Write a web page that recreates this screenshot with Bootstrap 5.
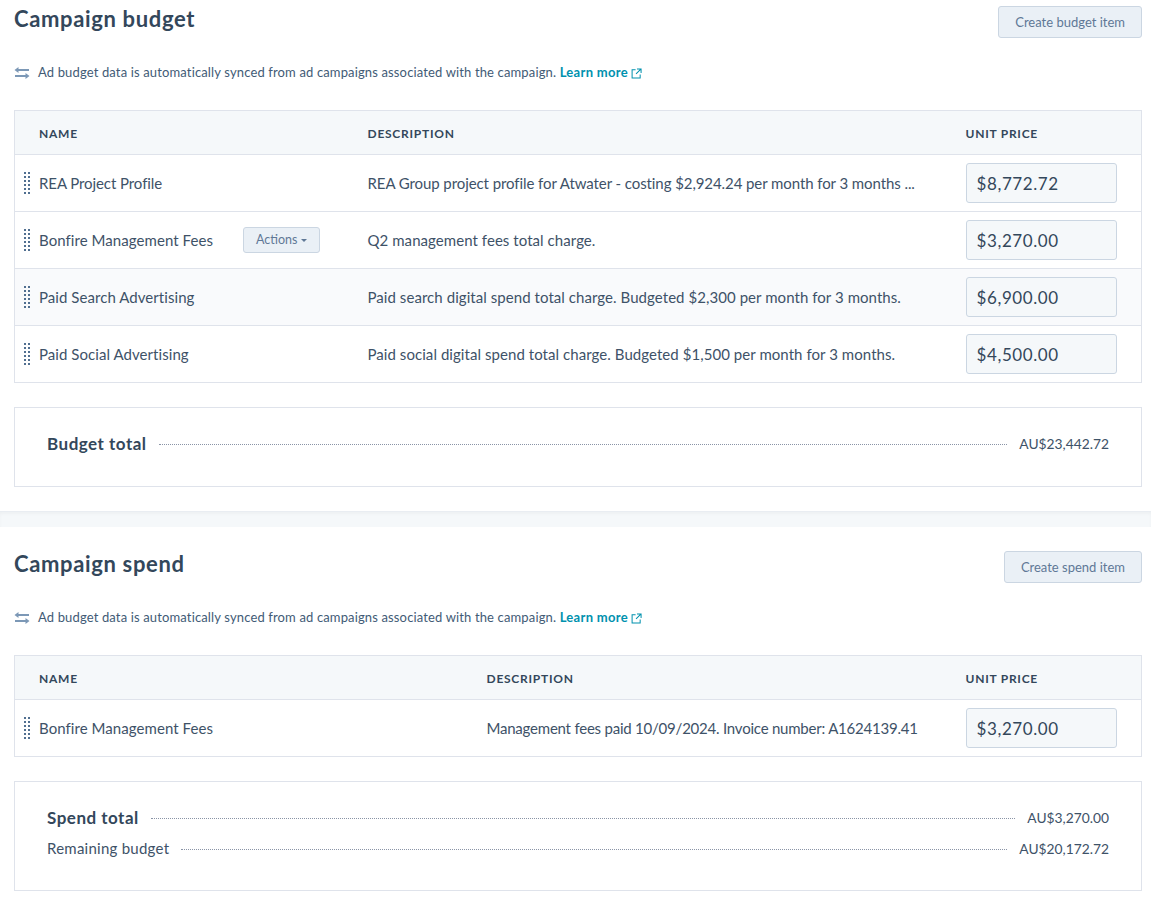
<!DOCTYPE html>
<html lang="en">
<head>
    <meta charset="UTF-8">
    <title>Campaign budget</title>
    <link rel="stylesheet" href="https://cdn.jsdelivr.net/npm/bootstrap@5.3.0/dist/css/bootstrap.min.css">
    <style>
        html, body { margin: 0; background: #fff; }
        body {
            font-family: "Lato", "Liberation Sans", sans-serif;
            color: #33475b;
            font-size: 15px;
            height: 899px;
            overflow: hidden;
        }
        .budget-section { padding: 0 9px 0 14px; }
        .budget-section.next-section { padding-top: 18px; }
        .budget-head { height: 38px; }
        .budget-title { font-size: 22px; font-weight: 700; margin: 0; color: #33475b; line-height: 38px; letter-spacing: .65px; }
        .soft-btn {
            background: #eaf0f6; border: 1px solid #cbd6e2; border-radius: 3px; color: #5f7896;
            font-size: 13px; line-height: 1;
        }
        .soft-btn.create-btn { height: 32px; padding: 0 16px; margin-top: 6px; }
        .soft-btn.actions-btn { height: 26px; padding: 0 12px; font-size: 12.5px; }
        .soft-btn.actions-btn::after { margin-left: 3px; vertical-align: 2px; border-top-width: 3.5px; border-left-width: 3.5px; border-right-width: 3.5px; }
        .sync-note { font-size: 13px; height: 17px; margin-top: 26px; margin-bottom: 29px; letter-spacing: .14px; color: #425b76; line-height: 17px; }
        .sync-note svg { flex: none; }
        .sync-note a { color: #0091ae; font-weight: 700; text-decoration: none; letter-spacing: .3px; }
        .budget-table { border: 1px solid #dfe3eb; margin: 0; table-layout: fixed; width: 100%; border-collapse: collapse; }
        .budget-table th {
            background: #f5f8fa; height: 44px; padding: 3px 0 0 24px; font-size: 12px; font-weight: 700;
            letter-spacing: .75px; color: #33475b; border-bottom: 1px solid #dfe3eb; vertical-align: middle;
        }
        .budget-table td { height: 57px; padding: 0 0 0 24px; border-bottom: 1px solid #dfe3eb; vertical-align: middle; font-size: 15px; letter-spacing: .06px; color: #3e5268; white-space: nowrap; }
        .budget-table tr:last-child td { border-bottom: 0; }
        .budget-table tr.row-hover td { background: #f9fafc; }
        .budget-table td.name-cell { position: relative; }
        .budget-table th.desc-col, .budget-table td.desc-col { padding-left: 0; }
        .budget-table th.price-col, .budget-table td.price-col { padding-left: 0; }
        .budget-table td.tight-line { letter-spacing: -.08px; }
        .budget-table td.tighter-line { letter-spacing: -.22px; }
        .drag-dots { position: absolute; left: 9px; top: 50%; transform: translateY(-50%); display: block; }
        .price-box {
            width: 151px; height: 40px; background: #f5f8fa; border: 1px solid #cbd6e2; border-radius: 3px;
            font-size: 17px; line-height: 39px; padding: 0 10px; color: #33475b; letter-spacing: .6px;
        }
        .total-box { border: 1px solid #dfe3eb; margin-top: 24px; padding: 20px 32px 0; }
        .total-box.one-line { height: 80px; }
        .total-box.two-line { height: 110px; }
        .total-line { height: 31px; }
        .total-label { font-size: 17px; font-weight: 700; letter-spacing: .5px; }
        .total-line.plain .total-label { font-size: 15px; font-weight: 400; letter-spacing: .25px; color: #3e5268; }
        .total-dots { flex: 1; border-bottom: 1px dotted #8a94a6; margin: 2px 12px 0; }
        .total-value { font-size: 13.8px; padding-top: 1px; color: #3e5268; }
        .section-gap { height: 16px; margin-top: 24px; background: #f5f8fa; border-top: 1px solid #e9edf2; box-shadow: inset 0 2px 3px rgba(0,0,0,.03); }
    </style>
</head>
<body>
    <section class="budget-section">
        <div class="budget-head d-flex justify-content-between align-items-start">
            <h2 class="budget-title">Campaign budget</h2>
            <button type="button" class="btn soft-btn create-btn">Create budget item</button>
        </div>
        <div class="sync-note d-flex align-items-center gap-2">
            <svg width="16" height="12" viewBox="0 0 16 12" fill="#7c98b6"><path d="M15 2H4.5V0L.5 3l4 3V4H15zM1 8h10.5V6l4 3-4 3v-2H1z"/></svg>
            <span>Ad budget data is automatically synced from ad campaigns associated with the campaign. <a href="#">Learn more <svg width="11" height="11" viewBox="0 0 12 12" fill="none" stroke="#0091ae" stroke-width="1.1"><path d="M5 2H1.2v8.8H10V7M6.5 1h4.5v4.5M11 1 5.5 6.5"/></svg></a></span>
        </div>
        <table class="budget-table">
            <colgroup><col style="width:353px"><col><col style="width:176px"></colgroup>
            <thead>
                <tr><th>NAME</th><th class="desc-col">DESCRIPTION</th><th class="price-col">UNIT PRICE</th></tr>
            </thead>
            <tbody>
                <tr>
                    <td class="name-cell tight-line"><svg class="drag-dots" width="6" height="22" viewBox="0 0 6 22" fill="#516f90"><path d="M0 0h2v2H0zM4 0h2v2H4zM0 4h2v2H0zM4 4h2v2H4zM0 8h2v2H0zM4 8h2v2H4zM0 12h2v2H0zM4 12h2v2H4zM0 16h2v2H0zM4 16h2v2H4zM0 20h2v2H0zM4 20h2v2H4z"/></svg>REA Project Profile</td>
                    <td class="desc-col tight-line">REA Group project profile for Atwater - costing $2,924.24 per month for 3 months ...</td>
                    <td class="price-col"><div class="price-box">$8,772.72</div></td>
                </tr>
                <tr>
                    <td class="name-cell"><svg class="drag-dots" width="6" height="22" viewBox="0 0 6 22" fill="#516f90"><path d="M0 0h2v2H0zM4 0h2v2H4zM0 4h2v2H0zM4 4h2v2H4zM0 8h2v2H0zM4 8h2v2H4zM0 12h2v2H0zM4 12h2v2H4zM0 16h2v2H0zM4 16h2v2H4zM0 20h2v2H0zM4 20h2v2H4z"/></svg><div class="d-flex justify-content-between align-items-center pe-5"><span>Bonfire Management Fees</span><button type="button" class="btn soft-btn actions-btn dropdown-toggle">Actions</button></div></td>
                    <td class="desc-col">Q2 management fees total charge.</td>
                    <td class="price-col"><div class="price-box">$3,270.00</div></td>
                </tr>
                <tr class="row-hover">
                    <td class="name-cell"><svg class="drag-dots" width="6" height="22" viewBox="0 0 6 22" fill="#516f90"><path d="M0 0h2v2H0zM4 0h2v2H4zM0 4h2v2H0zM4 4h2v2H4zM0 8h2v2H0zM4 8h2v2H4zM0 12h2v2H0zM4 12h2v2H4zM0 16h2v2H0zM4 16h2v2H4zM0 20h2v2H0zM4 20h2v2H4z"/></svg>Paid Search Advertising</td>
                    <td class="desc-col">Paid search digital spend total charge. Budgeted $2,300 per month for 3 months.</td>
                    <td class="price-col"><div class="price-box">$6,900.00</div></td>
                </tr>
                <tr>
                    <td class="name-cell"><svg class="drag-dots" width="6" height="22" viewBox="0 0 6 22" fill="#516f90"><path d="M0 0h2v2H0zM4 0h2v2H4zM0 4h2v2H0zM4 4h2v2H4zM0 8h2v2H0zM4 8h2v2H4zM0 12h2v2H0zM4 12h2v2H4zM0 16h2v2H0zM4 16h2v2H4zM0 20h2v2H0zM4 20h2v2H4z"/></svg>Paid Social Advertising</td>
                    <td class="desc-col">Paid social digital spend total charge. Budgeted $1,500 per month for 3 months.</td>
                    <td class="price-col"><div class="price-box">$4,500.00</div></td>
                </tr>
            </tbody>
        </table>
        <div class="total-box one-line">
            <div class="total-line d-flex align-items-center">
                <span class="total-label">Budget total</span><span class="total-dots"></span><span class="total-value">AU$23,442.72</span>
            </div>
        </div>
    </section>
    <div class="section-gap"></div>
    <section class="budget-section next-section">
        <div class="budget-head d-flex justify-content-between align-items-start">
            <h2 class="budget-title">Campaign spend</h2>
            <button type="button" class="btn soft-btn create-btn">Create spend item</button>
        </div>
        <div class="sync-note d-flex align-items-center gap-2">
            <svg width="16" height="12" viewBox="0 0 16 12" fill="#7c98b6"><path d="M15 2H4.5V0L.5 3l4 3V4H15zM1 8h10.5V6l4 3-4 3v-2H1z"/></svg>
            <span>Ad budget data is automatically synced from ad campaigns associated with the campaign. <a href="#">Learn more <svg width="11" height="11" viewBox="0 0 12 12" fill="none" stroke="#0091ae" stroke-width="1.1"><path d="M5 2H1.2v8.8H10V7M6.5 1h4.5v4.5M11 1 5.5 6.5"/></svg></a></span>
        </div>
        <table class="budget-table">
            <colgroup><col style="width:472px"><col><col style="width:176px"></colgroup>
            <thead>
                <tr><th>NAME</th><th class="desc-col">DESCRIPTION</th><th class="price-col">UNIT PRICE</th></tr>
            </thead>
            <tbody>
                <tr>
                    <td class="name-cell"><svg class="drag-dots" width="6" height="22" viewBox="0 0 6 22" fill="#516f90"><path d="M0 0h2v2H0zM4 0h2v2H4zM0 4h2v2H0zM4 4h2v2H4zM0 8h2v2H0zM4 8h2v2H4zM0 12h2v2H0zM4 12h2v2H4zM0 16h2v2H0zM4 16h2v2H4zM0 20h2v2H0zM4 20h2v2H4z"/></svg>Bonfire Management Fees</td>
                    <td class="desc-col tighter-line">Management fees paid 10/09/2024. Invoice number: A1624139.41</td>
                    <td class="price-col"><div class="price-box">$3,270.00</div></td>
                </tr>
            </tbody>
        </table>
        <div class="total-box two-line">
            <div class="total-line d-flex align-items-center">
                <span class="total-label">Spend total</span><span class="total-dots"></span><span class="total-value">AU$3,270.00</span>
            </div>
            <div class="total-line plain d-flex align-items-center">
                <span class="total-label">Remaining budget</span><span class="total-dots"></span><span class="total-value">AU$20,172.72</span>
            </div>
        </div>
    </section>
    <script src="https://cdn.jsdelivr.net/npm/bootstrap@5.3.0/dist/js/bootstrap.bundle.min.js"></script>
</body>
</html>
